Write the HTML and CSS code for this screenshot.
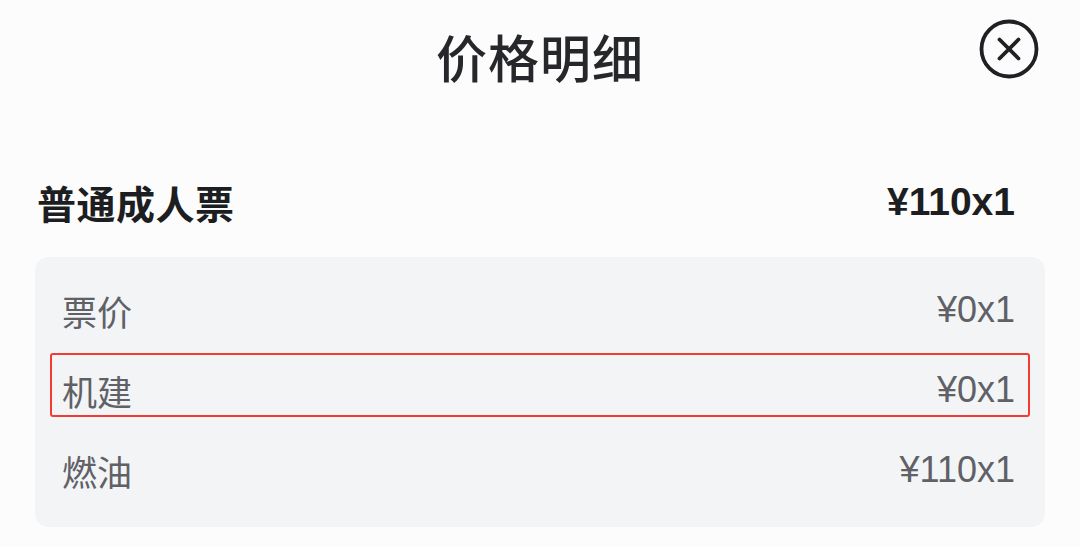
FILE: index.html
```html
<!DOCTYPE html>
<html lang="zh-CN">
<head>
<meta charset="utf-8">
<title>价格明细</title>
<link rel="stylesheet" href="styles.css">
</head>
<body>
<div class="sheet">
  <header class="header">
    <span class="spacer"></span>
    <h1 class="title">价格明细</h1>
    <button class="close" aria-label="关闭">
      <svg width="62" height="62" viewBox="0 0 62 62">
        <circle cx="31" cy="31" r="27.5" fill="none" stroke="#1f2024" stroke-width="3.8"/>
        <path d="M21.5 21.5 L40.5 40.5 M40.5 21.5 L21.5 40.5" stroke="#1f2024" stroke-width="3.8" stroke-linecap="round"/>
      </svg>
    </button>
  </header>

  <div class="group-head">
    <span class="group-name">普通成人票</span>
    <span class="group-price">¥110x1</span>
  </div>

  <div class="panel">
    <div class="row"><span class="label">票价</span><span class="amount">¥0x1</span></div>
    <div class="row row-marked"><span class="label">机建</span><span class="amount">¥0x1</span></div>
    <div class="row"><span class="label">燃油</span><span class="amount">¥110x1</span></div>
  </div>
</div>
</body>
</html>
```

FILE: styles.css
```css
* { box-sizing: border-box; }
html, body {
  margin: 0;
  padding: 0;
  background: #fcfcfc;
}
body {
  width: 1080px;
  height: 547px;
  overflow: hidden;
  font-family: "Noto Sans CJK SC", "Noto Sans", sans-serif;
  color: #222327;
}
.sheet {
  display: flex;
  flex-direction: column;
}
.header {
  display: grid;
  grid-template-columns: 1fr auto 1fr;
  align-items: center;
  height: 110px;
}
.title {
  margin: 0;
  font-size: 51px;
  font-weight: 500;
  color: #26272b;
  letter-spacing: 1px;
  line-height: 1;
  padding-top: 2px;
}
.close {
  justify-self: end;
  margin-right: 40px;
  margin-top: -12px;
  padding: 0;
  border: 0;
  background: none;
  width: 62px;
  height: 62px;
  display: flex;
}
.group-head {
  display: flex;
  justify-content: space-between;
  align-items: center;
  height: 80px;
  margin-top: 52px;
  padding: 0 65px 0 37px;
}
.group-name {
  font-size: 39px;
  font-weight: 600;
  color: #1d1e22;
  letter-spacing: 0.5px;
}
.group-price {
  font-family: "Liberation Sans", Arial, sans-serif;
  font-size: 39px;
  font-weight: 700;
  color: #1d1e22;
}
.panel {
  margin: 15px 35px 0;
  height: 270px;
  padding: 13px 30px 17px 27px;
  background: #f3f4f6;
  border-radius: 14px;
}
.row {
  position: relative;
  display: flex;
  justify-content: space-between;
  align-items: center;
  height: 80px;
}
.label {
  font-size: 35px;
  color: #5f6166;
}
.amount {
  font-family: "Liberation Sans", Arial, sans-serif;
  font-size: 36px;
  color: #5f6166;
}
.row-marked::after {
  content: "";
  position: absolute;
  top: 3px;
  bottom: 13px;
  left: -12px;
  right: -15px;
  border: 2px solid #f53a33;
  border-radius: 3px;
}
```
